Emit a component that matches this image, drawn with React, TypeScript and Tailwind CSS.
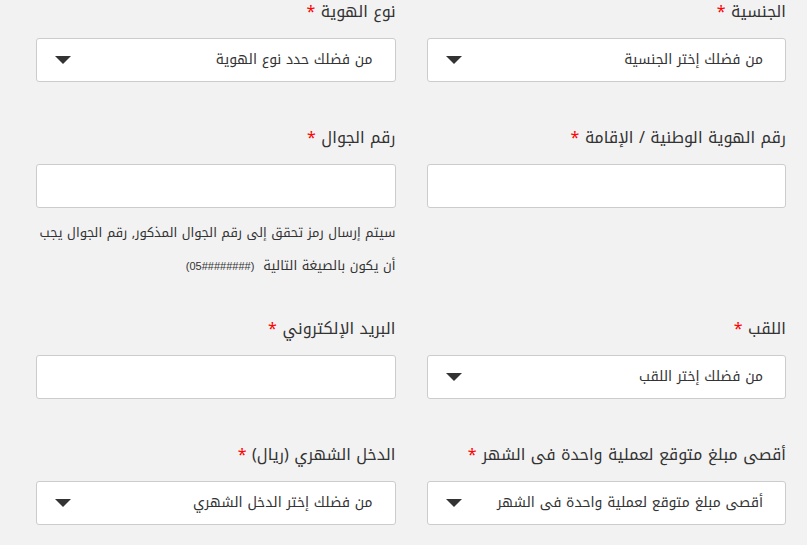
import React from "react";

const FONT = { fontFamily: '"Noto Kufi Arabic", "DejaVu Sans", sans-serif' };

function Label({ text }: { text: string }) {
  return (
    <div className="h-6 text-[16px] leading-6 text-[#333] whitespace-nowrap">
      {text} <span className="text-[#ff0000]">*</span>
    </div>
  );
}

function Caret() {
  return (
    <svg width="16" height="8" viewBox="0 0 16 8" className="shrink-0">
      <path d="M0 0 L16 0 L8 8 Z" fill="#333" />
    </svg>
  );
}

function SelectBox({ placeholder }: { placeholder: string }) {
  return (
    <div className="mt-[14px] h-[44px] bg-white border border-[#cccccc] rounded-[3px] flex items-center justify-between pr-[22px] pl-[18px]">
      <span className="text-[14px] text-[#333] leading-6 whitespace-nowrap">{placeholder}</span>
      <Caret />
    </div>
  );
}

function InputBox() {
  return <div className="mt-[14px] h-[44px] bg-white border border-[#cccccc] rounded-[3px]" />;
}

export default function App() {
  return (
    <div dir="rtl" className="w-[807px] h-[545px] overflow-hidden bg-[#f2f2f2] pr-[21px] pl-[36px]" style={FONT}>
      <div className="grid grid-cols-2 gap-x-[31px] mb-[44px]">
        <div>
          <Label text="الجنسية" />
          <SelectBox placeholder="من فضلك إختر الجنسية" />
        </div>
        <div>
          <Label text="نوع الهوية" />
          <SelectBox placeholder="من فضلك حدد نوع الهوية" />
        </div>
      </div>

      <div className="grid grid-cols-2 gap-x-[31px] mb-[34px] items-start">
        <div>
          <Label text="رقم الهوية الوطنية / الإقامة" />
          <InputBox />
        </div>
        <div>
          <Label text="رقم الجوال" />
          <InputBox />
          <div className="mt-[8px] text-[13px] leading-[33px] text-[#333]">
            <div className="whitespace-nowrap">سيتم إرسال رمز تحقق إلى رقم الجوال المذكور, رقم الجوال يجب</div>
            <div className="whitespace-nowrap">
              أن يكون بالصيغة التالية{"\u00a0\u00a0"}
              <span
                dir="ltr"
                className="text-[11px] text-[#333] [unicode-bidi:isolate] font-['Liberation_Sans',sans-serif]"
              >
                (05########)
              </span>
            </div>
          </div>
        </div>
      </div>

      <div className="grid grid-cols-2 gap-x-[31px] mb-[44px]">
        <div>
          <Label text="اللقب" />
          <SelectBox placeholder="من فضلك إختر اللقب" />
        </div>
        <div>
          <Label text="البريد الإلكتروني" />
          <InputBox />
        </div>
      </div>

      <div className="grid grid-cols-2 gap-x-[31px]">
        <div>
          <Label text="أقصى مبلغ متوقع لعملية واحدة فى الشهر" />
          <SelectBox placeholder="أقصى مبلغ متوقع لعملية واحدة فى الشهر" />
        </div>
        <div>
          <Label text="الدخل الشهري (ريال)" />
          <SelectBox placeholder="من فضلك إختر الدخل الشهري" />
        </div>
      </div>
    </div>
  );
}
